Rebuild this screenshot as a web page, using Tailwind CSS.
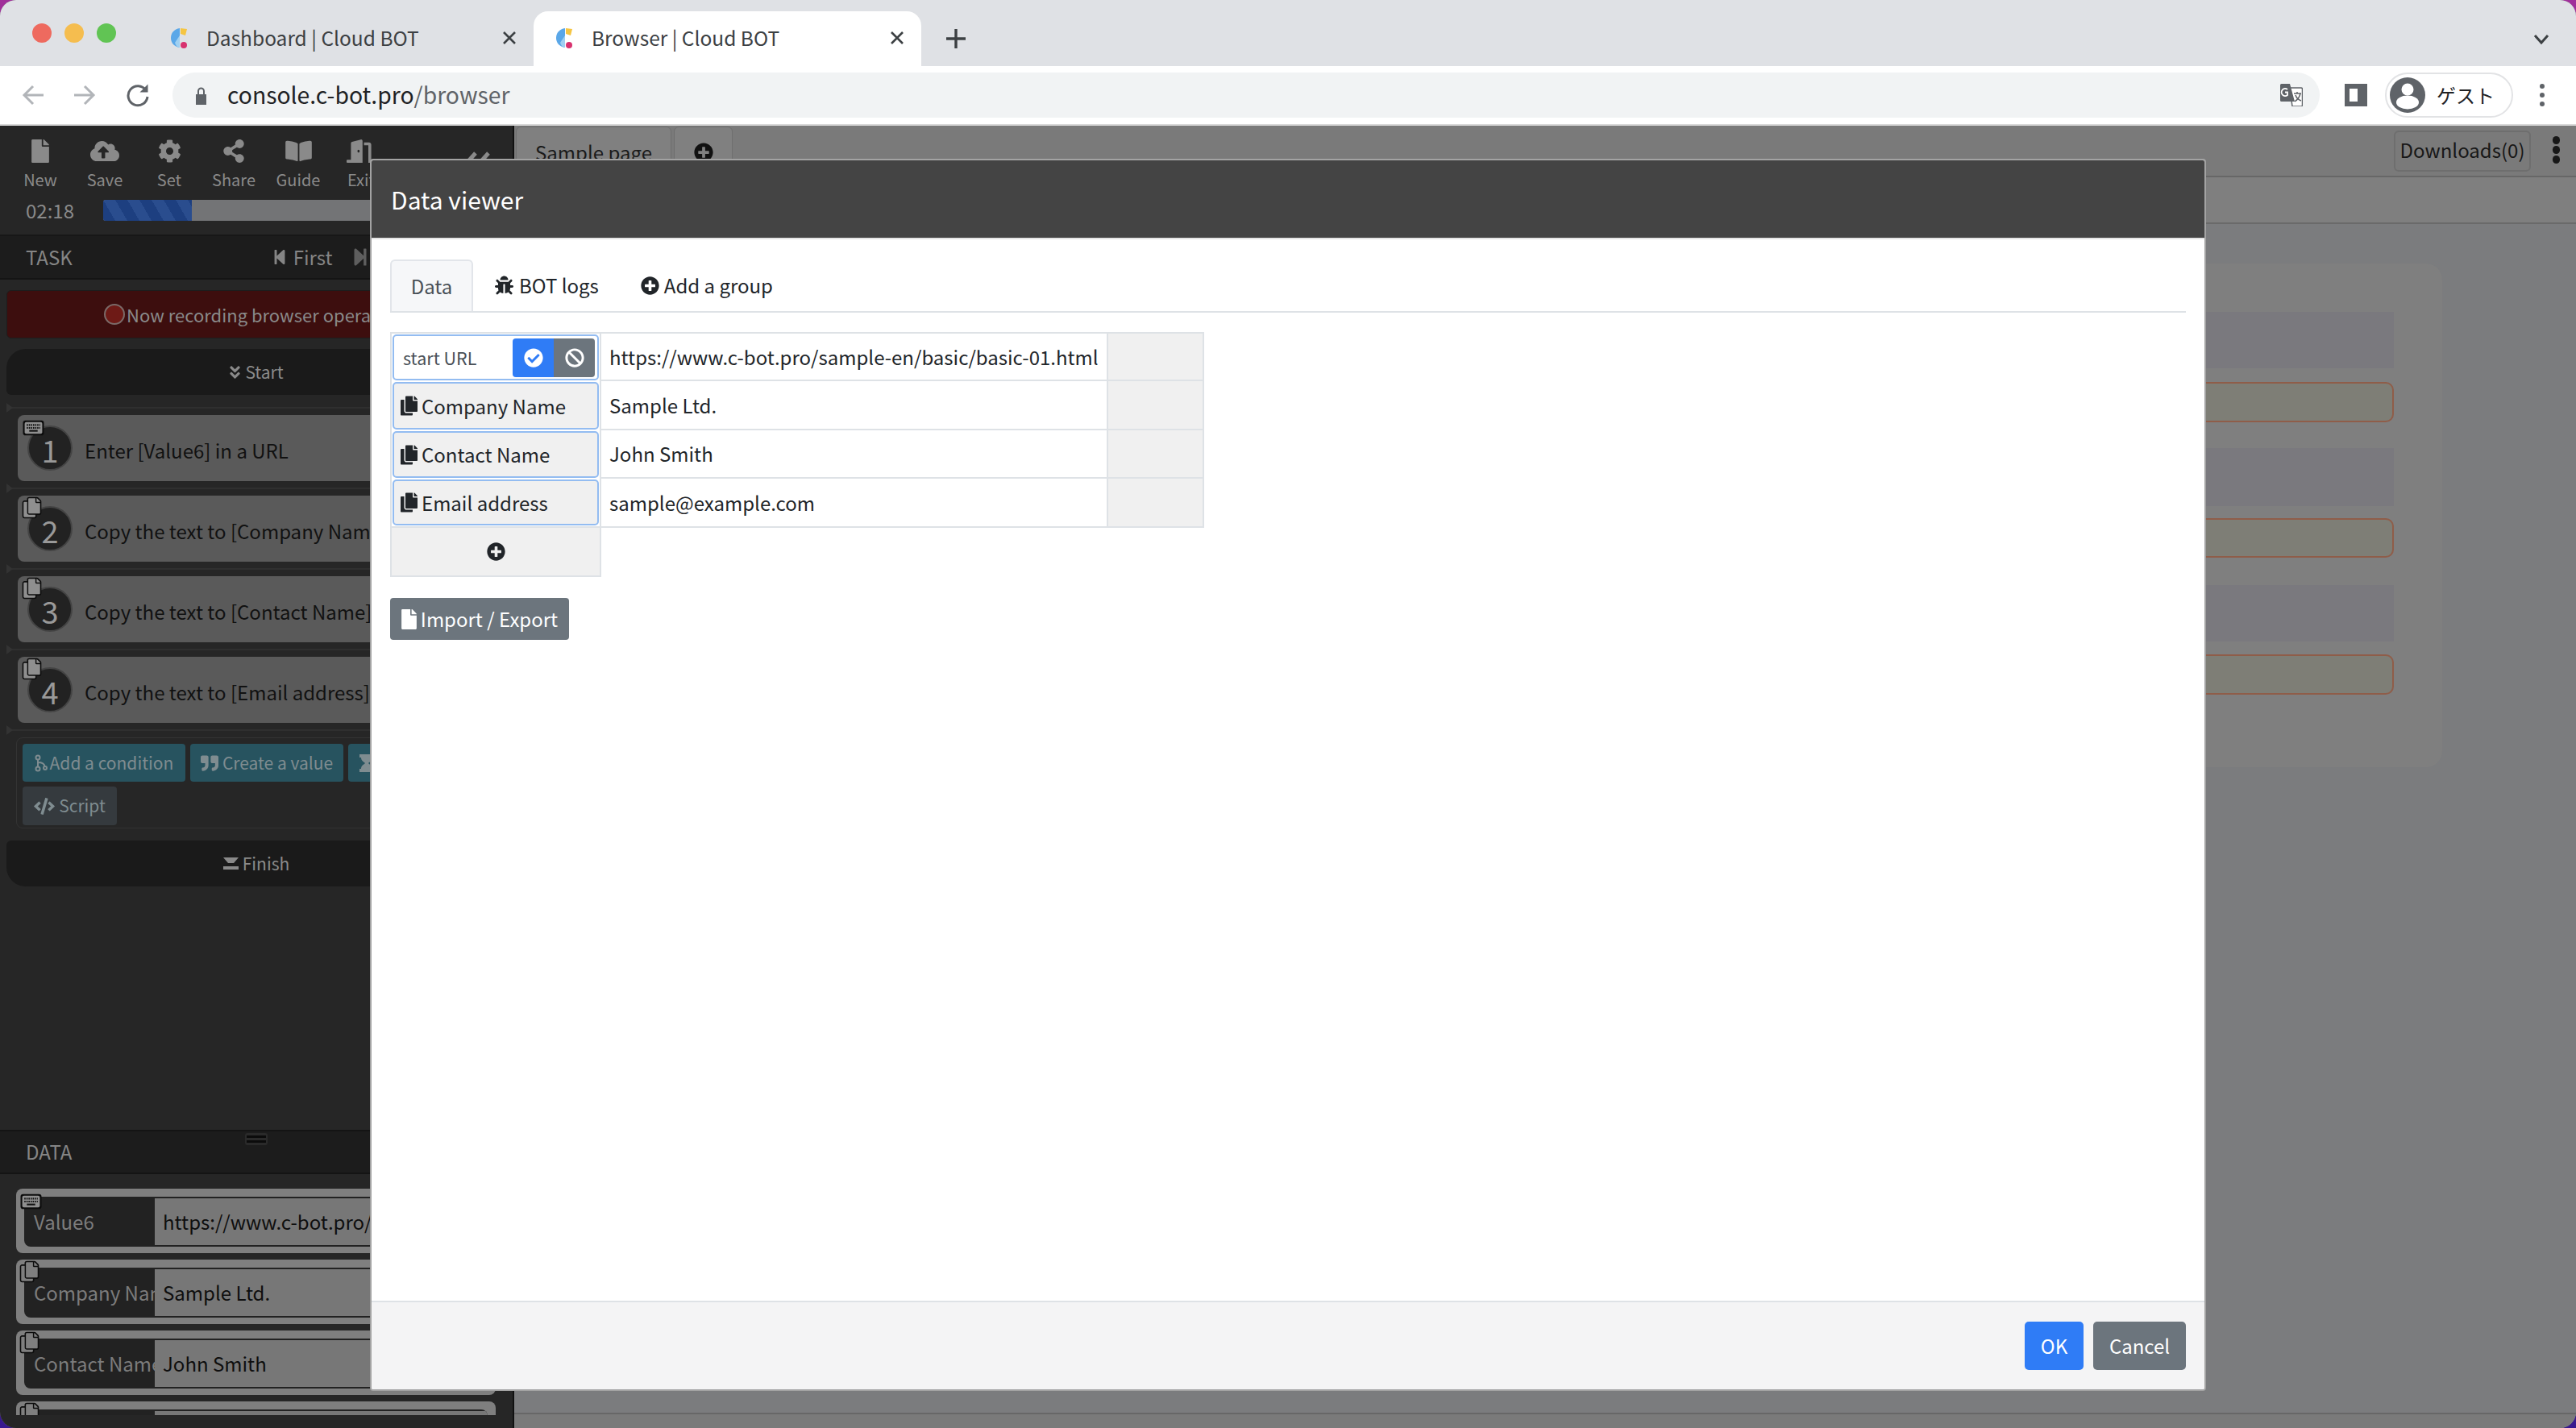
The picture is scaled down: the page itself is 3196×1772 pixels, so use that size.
<!DOCTYPE html>
<html lang="en">
<head>
<meta charset="UTF-8">
<title>Browser | Cloud BOT</title>
<script src="https://cdn.jsdelivr.net/npm/@tailwindcss/browser@4"></script>
</head>
<body class="w-[3196px] h-[1772px] overflow-hidden bg-linear-to-b from-[#a0309a] to-[#38188e] font-['Noto_Sans_CJK_JP','Noto_Sans',sans-serif]">
<svg class="hidden">
  <symbol id="i-file" viewBox="0 0 384 512"><path d="M224 136V0H24C10.7 0 0 10.7 0 24v464c0 13.3 10.7 24 24 24h336c13.3 0 24-10.7 24-24V160H248c-13.2 0-24-10.8-24-24zm160-14.1v6.1H256V0h6.1c6.4 0 12.5 2.5 17 7l97.9 98c4.5 4.5 7 10.6 7 16.9z"/></symbol>
  <symbol id="i-copy" viewBox="0 0 448 512"><path id="p-copy" paint-order="stroke" d="M320 448v40c0 13.255-10.745 24-24 24H24c-13.255 0-24-10.745-24-24V120c0-13.255 10.745-24 24-24h72v296c0 30.879 25.121 56 56 56h168zm0-344V0H152c-13.255 0-24 10.745-24 24v368c0 13.255 10.745 24 24 24h272c13.255 0 24-10.745 24-24V128H344c-13.2 0-24-10.8-24-24zm120.971-31.029L375.029 7.029A24 24 0 0 0 358.059 0H352v96h96v-6.059a24 24 0 0 0-7.029-16.97z"/></symbol>
  <symbol id="i-copy-badge" viewBox="-50 -50 548 612"><use href="#p-copy"/></symbol>
  <symbol id="i-plus" viewBox="0 0 512 512"><path d="M256 8C119 8 8 119 8 256s111 248 248 248 248-111 248-248S393 8 256 8zm144 276c0 6.6-5.4 12-12 12h-92v92c0 6.6-5.4 12-12 12h-56c-6.6 0-12-5.4-12-12v-92h-92c-6.6 0-12-5.4-12-12v-56c0-6.6 5.4-12 12-12h92v-92c0-6.6 5.4-12 12-12h56c6.6 0 12 5.4 12 12v92h92c6.6 0 12 5.4 12 12v56z"/></symbol>
  <symbol id="i-check" viewBox="0 0 512 512"><path d="M504 256c0 136.967-111.033 248-248 248S8 392.967 8 256 119.033 8 256 8s248 111.033 248 248zM227.314 387.314l184-184c6.248-6.248 6.248-16.379 0-22.627l-22.627-22.627c-6.248-6.249-16.379-6.249-22.628 0L216 308.118l-70.059-70.059c-6.248-6.248-16.379-6.248-22.628 0l-22.627 22.627c-6.248 6.248-6.248 16.379 0 22.627l104 104c6.249 6.249 16.379 6.249 22.628.001z"/></symbol>
  <symbol id="i-ban" viewBox="0 0 512 512"><path d="M256 8C119.034 8 8 119.033 8 256s111.034 248 248 248 248-111.034 248-248S392.967 8 256 8zm130.108 117.892c65.448 65.448 70 165.481 20.677 235.637L150.47 105.216c70.204-49.356 170.226-44.735 235.638 20.676zM125.892 386.108c-65.448-65.448-70-165.481-20.677-235.637L361.53 406.784c-70.203 49.356-170.226 44.736-235.638-20.676z"/></symbol>
  <symbol id="i-cog" viewBox="0 0 512 512"><path d="M487.4 315.7l-42.6-24.6c4.3-23.2 4.3-47 0-70.2l42.6-24.6c4.9-2.8 7.1-8.6 5.5-14-11.1-35.6-30-67.8-54.7-94.6-3.8-4.1-10-5.1-14.8-2.3L380.8 110c-17.9-15.4-38.5-27.3-60.8-35.1V25.8c0-5.6-3.9-10.5-9.4-11.7-36.7-8.2-74.3-7.8-109.2 0-5.5 1.2-9.4 6.1-9.4 11.7V75c-22.2 7.9-42.8 19.8-60.8 35.1L88.7 85.5c-4.9-2.8-11-1.9-14.8 2.3-24.7 26.7-43.6 58.9-54.7 94.6-1.7 5.4.6 11.2 5.5 14L67.3 221c-4.3 23.2-4.3 47 0 70.2l-42.6 24.6c-4.9 2.8-7.1 8.6-5.5 14 11.1 35.6 30 67.8 54.7 94.6 3.8 4.1 10 5.1 14.8 2.3l42.6-24.6c17.9 15.4 38.5 27.3 60.8 35.1v49.2c0 5.6 3.9 10.5 9.4 11.7 36.7 8.2 74.3 7.8 109.2 0 5.5-1.2 9.4-6.1 9.4-11.7v-49.2c22.2-7.9 42.8-19.8 60.8-35.1l42.6 24.6c4.9 2.8 11 1.9 14.8-2.3 24.7-26.7 43.6-58.9 54.7-94.6 1.5-5.5-.7-11.3-5.6-14.1zM256 336c-44.1 0-80-35.9-80-80s35.9-80 80-80 80 35.9 80 80-35.9 80-80 80z"/></symbol>
  <symbol id="i-share" viewBox="0 0 448 512"><path d="M352 320c-22.608 0-43.387 7.819-59.79 20.895l-102.486-64.054a96.551 96.551 0 0 0 0-41.683l102.486-64.054C308.613 184.181 329.392 192 352 192c53.019 0 96-42.981 96-96S405.019 0 352 0s-96 42.981-96 96c0 7.158.79 14.13 2.276 20.841L155.79 180.895C139.387 167.819 118.608 160 96 160c-53.019 0-96 42.981-96 96s42.981 96 96 96c22.608 0 43.387-7.819 59.79-20.895l102.486 64.054A96.301 96.301 0 0 0 256 416c0 53.019 42.981 96 96 96s96-42.981 96-96-42.981-96-96-96z"/></symbol>
  <symbol id="i-cloud" viewBox="0 0 640 512"><path d="M537.6 226.6c4.1-10.7 6.4-22.4 6.4-34.6 0-53-43-96-96-96-19.7 0-38.1 6-53.3 16.2C367 64.2 315.3 32 256 32c-88.4 0-160 71.6-160 160 0 2.7.1 5.4.2 8.1C40.2 219.8 0 273.2 0 336c0 79.5 64.5 144 144 144h368c70.7 0 128-57.3 128-128 0-61.9-44-113.6-102.4-125.4zM393.4 288H328v112c0 8.8-7.2 16-16 16h-48c-8.8 0-16-7.2-16-16V288h-65.4c-14.3 0-21.4-17.2-11.3-27.3l105.4-105.4c6.2-6.2 16.4-6.2 22.6 0l105.4 105.4c10.1 10.1 2.9 27.3-11.3 27.3z"/></symbol>
  <symbol id="i-book" viewBox="0 0 576 512"><path d="M542.22 32.05c-54.8 3.11-163.72 14.43-230.96 55.59-4.64 2.84-7.27 7.89-7.27 13.17v363.87c0 11.55 12.63 18.85 23.28 13.49 69.18-34.82 169.23-44.32 218.7-46.92 16.89-.89 30.02-14.43 30.02-30.66V62.75c.01-17.71-15.35-31.74-33.77-30.7zM264.73 87.64C197.5 46.48 88.58 35.17 33.78 32.05 15.36 31.01 0 45.04 0 62.75V400.6c0 16.24 13.13 29.78 30.02 30.66 49.49 2.6 149.59 12.11 218.77 46.95 10.62 5.35 23.21-1.94 23.21-13.46V100.63c0-5.29-2.62-10.14-7.27-12.99z"/></symbol>
  <symbol id="i-door" viewBox="0 0 640 512"><path d="M624 448h-80V113.45C544 86.19 522.47 64 496 64H384v64h96v384h144c8.84 0 16-7.16 16-16v-32c0-8.84-7.16-16-16-16zM312.24 1.01l-192 49.74C105.99 54.44 96 67.7 96 82.92V448H16c-8.84 0-16 7.16-16 16v32c0 8.84 7.16 16 16 16h336V33.18c0-21.58-19.56-37.41-39.76-32.17zM264 288c-13.25 0-24-14.33-24-32s10.75-32 24-32 24 14.33 24 32-10.75 32-24 32z"/></symbol>
  <symbol id="i-bug" viewBox="0 0 512 512"><path d="M511.988 288.9c-.478 17.43-15.217 31.1-32.653 31.1H424v16c0 21.864-4.882 42.584-13.6 61.145l60.228 60.228c12.496 12.497 12.496 32.758 0 45.255-12.498 12.497-32.759 12.496-45.256 0l-54.736-54.736C345.886 467.965 314.351 480 280 480V236c0-6.627-5.373-12-12-12h-24c-6.627 0-12 5.373-12 12v244c-34.351 0-65.886-12.035-90.636-32.108l-54.736 54.736c-12.498 12.497-32.759 12.496-45.256 0-12.496-12.497-12.496-32.758 0-45.255l60.228-60.228C92.882 378.584 88 357.864 88 336v-16H32.666C15.23 320 .491 306.33.013 288.9-.484 270.816 14.028 256 32 256h56v-58.745l-46.628-46.628c-12.496-12.497-12.496-32.758 0-45.255 12.498-12.497 32.758-12.497 45.256 0L141.255 160h229.489l54.627-54.627c12.498-12.497 32.758-12.497 45.256 0 12.496 12.497 12.496 32.758 0 45.255L424 197.255V256h56c17.972 0 32.484 14.816 31.988 32.9zM257 0c-61.856 0-112 50.144-112 112h224C369 50.144 318.856 0 257 0z"/></symbol>
  <symbol id="i-first" viewBox="0 0 448 512"><path d="M64 468V44c0-6.6 5.4-12 12-12h48c6.6 0 12 5.4 12 12v176.4l195.5-181C352.1 22.3 384 36.6 384 64v384c0 27.4-31.9 41.7-52.5 24.6L136 292.7V468c0 6.6-5.4 12-12 12H76c-6.6 0-12-5.4-12-12z"/></symbol>
  <symbol id="i-down" viewBox="0 0 320 512"><path d="M143 256.3L7 120.3c-9.4-9.4-9.4-24.6 0-33.9l22.6-22.6c9.4-9.4 24.6-9.4 33.9 0l96.4 96.4 96.4-96.4c9.4-9.4 24.6-9.4 33.9 0L313 86.3c9.4 9.4 9.4 24.6 0 33.9l-136 136c-9.4 9.5-24.6 9.5-34 .1zm34 192l136-136c9.4-9.4 9.4-24.6 0-33.9l-22.6-22.6c-9.4-9.4-24.6-9.4-33.9 0L160 352.1l-96.4-96.4c-9.4-9.4-24.6-9.4-33.9 0L7 278.3c-9.4 9.4-9.4 24.6 0 33.9l136 136c9.4 9.5 24.6 9.5 34 .1z"/></symbol>
  <symbol id="i-quote" viewBox="0 0 512 512"><path d="M464 32H336c-26.5 0-48 21.5-48 48v128c0 26.5 21.5 48 48 48h80v64c0 35.3-28.7 64-64 64h-8c-13.3 0-24 10.7-24 24v48c0 13.3 10.7 24 24 24h8c88.4 0 160-71.6 160-160V80c0-26.5-21.5-48-48-48zm-288 0H48C21.5 32 0 53.5 0 80v128c0 26.5 21.5 48 48 48h80v64c0 35.3-28.7 64-64 64h-8c-13.3 0-24 10.7-24 24v48c0 13.3 10.7 24 24 24h8c88.4 0 160-71.6 160-160V80c0-26.5-21.5-48-48-48z"/></symbol>
  <symbol id="i-code" viewBox="0 0 640 512"><path d="M278.9 511.5l-61-17.7c-6.4-1.8-10-8.5-8.2-14.9L346.2 8.7c1.8-6.4 8.5-10 14.9-8.2l61 17.7c6.4 1.8 10 8.5 8.2 14.9L293.8 503.3c-1.9 6.4-8.5 10.1-14.9 8.2zm-114-112.2l43.5-46.4c4.6-4.9 4.3-12.7-.8-17.2L117 256l90.6-79.7c5.1-4.5 5.5-12.3.8-17.2l-43.5-46.4c-4.5-4.8-12.1-5.1-17-.5L3.8 247.2c-5.1 4.7-5.1 12.8 0 17.5l144.1 135.1c4.9 4.6 12.5 4.4 17-.5zm327.2.6l144.1-135.1c5.1-4.7 5.1-12.8 0-17.5L492.1 112.1c-4.8-4.5-12.4-4.3-17 .5L431.6 159c-4.6 4.9-4.3 12.7.8 17.2L523 256l-90.6 79.7c-5.1 4.5-5.5 12.3-.8 17.2l43.5 46.4c4.5 4.9 12.1 5.1 17 .6z"/></symbol>
  <symbol id="i-key" viewBox="0 0 26 19"><rect x="0.5" y="0.5" width="25" height="18" rx="3" fill="#0c0c0c"/><rect x="2.5" y="2.5" width="21" height="14" rx="2" fill="#8f8f8f"/><path d="M5 6h16M5 9.5h16" stroke="#111" stroke-width="2" stroke-dasharray="1.5 1"/><path d="M8 13h10" stroke="#111" stroke-width="2"/></symbol>
  <symbol id="i-fav" viewBox="0 0 24 28"><path d="M12 2C5 3 1 8 1 14s4 11 11 12z" fill="#5aa7e8"/><path d="M13 2l8 1-2 8-6-2z" fill="#f5c542"/><circle cx="17" cy="23" r="4" fill="#d8326f"/><path d="M6 20l6-9v15c-3 0-5-3-6-6z" fill="#9fd0f2"/></symbol>
</svg>

<div class="relative w-full h-full flex flex-col overflow-hidden rounded-[20px] bg-[#7b7c7e]">
  <!-- browser tabs -->
  <div class="h-[82px] shrink-0 flex bg-[#dfe1e5] relative">
    <div class="w-[184px] flex items-center gap-[20px] pl-[40px]">
      <span class="w-[24px] h-[24px] rounded-full bg-[#ee6a5f]"></span>
      <span class="w-[24px] h-[24px] rounded-full bg-[#f5bd4f] -ml-[4px]"></span>
      <span class="w-[24px] h-[24px] rounded-full bg-[#61c454] -ml-[4px]"></span>
    </div>
    <div class="w-[478px] flex items-center pt-[12px] pl-[27px]">
      <svg class="w-[24px] h-[28px]"><use href="#i-fav"/></svg>
      <span class="ml-[21px] text-[24.500px] leading-[36px] text-[#3c4043]">Dashboard | Cloud BOT</span>
      <svg class="ml-auto mr-[21px] w-[18px] h-[18px]" viewBox="0 0 18 18" stroke="#3c4043" stroke-width="2.6"><path d="M2 2l14 14M16 2L2 16"/></svg>
    </div>
    <div class="w-[481px] mt-[14px] pb-[2px] rounded-t-[18px] bg-white flex items-center pl-[27px]">
      <svg class="w-[24px] h-[28px]"><use href="#i-fav"/></svg>
      <span class="ml-[21px] text-[24.500px] leading-[36px] text-[#3c4043]">Browser | Cloud BOT</span>
      <svg class="ml-auto mr-[21px] w-[18px] h-[18px]" viewBox="0 0 18 18" stroke="#3c4043" stroke-width="2.6"><path d="M2 2l14 14M16 2L2 16"/></svg>
    </div>
    <div class="flex items-center pt-[14px] pl-[30px]">
      <svg class="w-[26px] h-[26px]" viewBox="0 0 26 26" stroke="#3c4043" stroke-width="3.4"><path d="M13 1v24M1 13h24"/></svg>
    </div>
    <svg class="absolute left-[3143px] top-[42px] w-[20px] h-[14px]" viewBox="0 0 20 14" fill="none" stroke="#3c4043" stroke-width="3"><path d="M2 2l8 9 8-9"/></svg>
  </div>

  <!-- address bar -->
  <div class="h-[72px] shrink-0 bg-white flex items-center">
    <svg class="ml-[27px] w-[28px] h-[28px]" viewBox="0 0 28 28" fill="none" stroke="#b2b5b9" stroke-width="3"><path d="M27 14H3M14 3L3 14l11 11"/></svg>
    <svg class="ml-[36px] w-[28px] h-[28px]" viewBox="0 0 28 28" fill="none" stroke="#b2b5b9" stroke-width="3"><path d="M1 14h24M14 3l11 11-11 11"/></svg>
    <svg class="ml-[37px] w-[30px] h-[30px]" viewBox="0 0 30 30" fill="none" stroke="#5f6368" stroke-width="3"><path d="M25 9a12 12 0 1 0 2 8"/><path d="M27.500 1.500v10h-10z" fill="#5f6368" stroke="none"/></svg>
    <div class="ml-[28px] w-[2664px] h-[56px] rounded-full bg-[#f1f3f4] flex items-center pl-[29px]">
      <svg class="w-[13px] h-[22px] mt-[2px]" viewBox="0 0 13 22" fill="#5f6368"><path d="M0 9h13v13H0z"/><path d="M3 10V5a3.5 3.5 0 0 1 7 0v5" fill="none" stroke="#5f6368" stroke-width="2"/></svg>
      <span class="ml-[26px] text-[28.300px] leading-[40px] -mt-[2px] text-[#202124]">console.c-bot.pro<span class="text-[#5f6368]">/browser</span></span>
      <svg class="ml-auto mr-[21px] w-[28px] h-[28px]" viewBox="0 0 28 28"><path d="M12 5h14a1.500 1.500 0 0 1 1.500 1.500v20a1.500 1.500 0 0 1-1.500 1.500H15z" fill="#fff" stroke="#5f6368" stroke-width="1.500"/><path d="M1.500 0H12l6 22H1.500A1.500 1.500 0 0 1 0 20.500v-19A1.500 1.500 0 0 1 1.500 0z" fill="#5f6368"/><path d="M12 8a4.500 4.500 0 1 0 0 7v-3.500H9" fill="none" stroke="#fff" stroke-width="1.800" transform="translate(-3 -1)"/><path d="M17 12h9M21 10v2M25 12c-1 5-4 8-7 10M19 14c1 3 4 6 7 7" fill="none" stroke="#5f6368" stroke-width="1.500"/></svg>
    </div>
    <div class="ml-[31px] w-[28px] h-[28px] border-[6px] border-[#5f6368] border-r-[12px]"></div>
    <div class="ml-[22px] w-[159px] h-[56px] rounded-full border-2 border-[#e2e3e5] flex items-center pl-[4px]">
      <svg class="w-[44px] h-[44px]" viewBox="0 0 44 44"><circle cx="22" cy="22" r="22" fill="#5f6368"/><circle cx="22" cy="15" r="7.500" fill="#fff"/><ellipse cx="22" cy="31" rx="14" ry="8.500" fill="#fff"/></svg>
      <span class="ml-[14px] text-[24px] leading-[32px] text-[#202124]">ゲスト</span>
    </div>
    <div class="ml-[33px] flex flex-col gap-[5px]">
      <span class="w-[6px] h-[6px] rounded-full bg-[#5f6368]"></span>
      <span class="w-[6px] h-[6px] rounded-full bg-[#5f6368]"></span>
      <span class="w-[6px] h-[6px] rounded-full bg-[#5f6368]"></span>
    </div>
  </div>
  <div class="h-[2px] shrink-0 bg-[#d9d9d9]"></div>

  <!-- app under the dialog -->
  <div class="flex-1 flex min-h-0">
    <aside class="w-[638px] shrink-0 flex flex-col bg-[#262626] border-r-2 border-[#111] overflow-hidden">
      <div class="h-[137px] shrink-0 flex flex-col border-b-2 border-[#171717]">
        <div class="flex pl-[10px] pt-[17px] text-[#8a8a8a] fill-[#8a8a8a]">
          <div class="w-[80px] flex flex-col items-center"><svg class="w-[22px] h-[29px]"><use href="#i-file"/></svg><span class="text-[20px] leading-[28px] mt-[7px]">New</span></div>
          <div class="w-[80px] flex flex-col items-center"><svg class="w-[36px] h-[29px]"><use href="#i-cloud"/></svg><span class="text-[20px] leading-[28px] mt-[7px]">Save</span></div>
          <div class="w-[80px] flex flex-col items-center"><svg class="w-[29px] h-[29px]"><use href="#i-cog"/></svg><span class="text-[20px] leading-[28px] mt-[7px]">Set</span></div>
          <div class="w-[80px] flex flex-col items-center"><svg class="w-[26px] h-[29px]"><use href="#i-share"/></svg><span class="text-[20px] leading-[28px] mt-[7px]">Share</span></div>
          <div class="w-[80px] flex flex-col items-center"><svg class="w-[33px] h-[29px]"><use href="#i-book"/></svg><span class="text-[20px] leading-[28px] mt-[7px]">Guide</span></div>
          <div class="w-[76px] flex flex-col items-center"><svg class="w-[36px] h-[29px]"><use href="#i-door"/></svg><span class="text-[20px] leading-[28px] mt-[7px]">Exit</span></div>
          <svg class="ml-[84px] mt-[13px] w-[40px] h-[26px]" viewBox="0 0 40 26" fill="none" stroke="#8a8a8a" stroke-width="5"><path d="M2 24L20 4M18 24L36 4"/></svg>
        </div>
        <div class="flex items-center mt-[9px] pl-[32px]">
          <span class="w-[96px] text-[24px] leading-[30px] text-[#8a8a8a]">02:18</span>
          <div class="w-[500px] h-[26px] rounded-[3px] bg-[#737476] overflow-hidden">
            <div class="w-[110px] h-full bg-[repeating-linear-gradient(60deg,#1d3f80_0,#1d3f80_13px,#2a4d8e_13px,#2a4d8e_26px)]"></div>
          </div>
        </div>
      </div>
      <div class="h-[54px] shrink-0 flex items-center bg-[#1c1c1c] border-b-2 border-[#141414] pl-[32px]">
        <span class="text-[24px] leading-[32px] text-[#858585]">TASK</span>
        <svg class="ml-[248px] w-[18px] h-[22px] fill-[#858585]"><use href="#i-first"/></svg>
        <span class="ml-[8px] text-[24px] leading-[32px] text-[#858585]">First</span>
        <svg class="ml-[22px] w-[24px] h-[24px] fill-[#5e5e5e] -scale-x-100"><use href="#i-first"/></svg>
        <span class="ml-[8px] text-[24px] leading-[32px] text-[#858585]">Next</span>
      </div>
      <div class="h-[1055px] shrink-0 flex flex-col px-[8px] pt-[13px]">
        <div class="h-[60px] shrink-0 rounded-[6px] bg-[#3d0e0e] border border-[#1d1d1d] flex items-center justify-center text-[22px] text-[#8a8a8a] whitespace-nowrap pr-[6px]">
          <span class="w-[26px] h-[26px] shrink-0 rounded-full bg-[#6e1a16] border-2 border-[#7b6a68] mr-[2px]"></span>Now recording browser operation
        </div>
        <div class="h-[57px] shrink-0 mt-[13px] rounded-tl-[24px] rounded-tr-[24px] rounded-b-[6px] bg-[#1a1a1a] flex items-center justify-center text-[21px] text-[#8a8a8a] gap-[5px]">
          <svg class="w-[15px] h-[20px] fill-[#8a8a8a]"><use href="#i-down"/></svg>Start
        </div>

        <div class="relative mt-[15px] h-[2px] bg-[#2f2f2f] shrink-0"><span class="absolute left-0 -top-[5px] border-y-[6px] border-l-[8px] border-y-transparent border-l-[#333]"></span></div>
        <div class="relative h-[82px] shrink-0 mt-[8px] ml-[14px] rounded-[8px] bg-[#5a5a5a] flex items-center">
          <span class="ml-[12px] w-[56px] h-[56px] rounded-full bg-[#222] border-2 border-[#444] flex items-center justify-center text-[38px] leading-[56px] pt-[4px] text-[#999]">1</span>
          <span class="ml-[15px] text-[24px] leading-[36px] text-[#111] pt-[6px] whitespace-nowrap">Enter [Value6] in a URL</span>
          <svg class="absolute left-[6px] top-[6px] w-[27px] h-[20px]"><use href="#i-key"/></svg>
        </div>
        <div class="relative mt-[8px] h-[2px] bg-[#2f2f2f] shrink-0"><span class="absolute left-0 -top-[5px] border-y-[6px] border-l-[8px] border-y-transparent border-l-[#333]"></span></div>
        <div class="relative h-[82px] shrink-0 mt-[8px] ml-[14px] rounded-[8px] bg-[#5a5a5a] flex items-center">
          <span class="ml-[12px] w-[56px] h-[56px] rounded-full bg-[#222] border-2 border-[#444] flex items-center justify-center text-[38px] leading-[56px] pt-[4px] text-[#999]">2</span>
          <span class="ml-[15px] text-[24px] leading-[36px] text-[#111] pt-[6px] whitespace-nowrap">Copy the text to [Company Name]</span>
          <svg class="absolute left-[5px] top-[1px] w-[25px] h-[28px] fill-[#8f8f8f] stroke-[#0c0c0c] stroke-[70]"><use href="#i-copy-badge"/></svg>
        </div>
        <div class="relative mt-[8px] h-[2px] bg-[#2f2f2f] shrink-0"><span class="absolute left-0 -top-[5px] border-y-[6px] border-l-[8px] border-y-transparent border-l-[#333]"></span></div>
        <div class="relative h-[82px] shrink-0 mt-[8px] ml-[14px] rounded-[8px] bg-[#5a5a5a] flex items-center">
          <span class="ml-[12px] w-[56px] h-[56px] rounded-full bg-[#222] border-2 border-[#444] flex items-center justify-center text-[38px] leading-[56px] pt-[4px] text-[#999]">3</span>
          <span class="ml-[15px] text-[24px] leading-[36px] text-[#111] pt-[6px] whitespace-nowrap">Copy the text to [Contact Name]</span>
          <svg class="absolute left-[5px] top-[1px] w-[25px] h-[28px] fill-[#8f8f8f] stroke-[#0c0c0c] stroke-[70]"><use href="#i-copy-badge"/></svg>
        </div>
        <div class="relative mt-[8px] h-[2px] bg-[#2f2f2f] shrink-0"><span class="absolute left-0 -top-[5px] border-y-[6px] border-l-[8px] border-y-transparent border-l-[#333]"></span></div>
        <div class="relative h-[82px] shrink-0 mt-[8px] ml-[14px] rounded-[8px] bg-[#5a5a5a] flex items-center">
          <span class="ml-[12px] w-[56px] h-[56px] rounded-full bg-[#222] border-2 border-[#444] flex items-center justify-center text-[38px] leading-[56px] pt-[4px] text-[#999]">4</span>
          <span class="ml-[15px] text-[24px] leading-[36px] text-[#111] pt-[6px] whitespace-nowrap">Copy the text to [Email address]</span>
          <svg class="absolute left-[5px] top-[1px] w-[25px] h-[28px] fill-[#8f8f8f] stroke-[#0c0c0c] stroke-[70]"><use href="#i-copy-badge"/></svg>
        </div>
        <div class="relative mt-[8px] h-[2px] bg-[#2f2f2f] shrink-0"><span class="absolute left-0 -top-[5px] border-y-[6px] border-l-[8px] border-y-transparent border-l-[#333]"></span></div>

        <div class="mt-[8px] ml-[12px] h-[113px] shrink-0 rounded-[8px] border border-[#333] p-[7px] flex flex-wrap gap-x-[6px] gap-y-[6px] content-start text-[21px] text-[#7f8c90]">
          <div class="h-[47px] w-[202px] rounded-[4px] bg-[#27535f] flex items-center justify-center gap-[3px]">
            <svg class="w-[16px] h-[22px]" viewBox="0 0 16 22" fill="none" stroke="#7f8c90" stroke-width="2"><circle cx="4" cy="4" r="2.500"/><circle cx="4" cy="18" r="2.500"/><circle cx="13" cy="17" r="2"/><path d="M4 7v8M4 10c5 0 8 2 8.500 5"/></svg>Add a condition
          </div>
          <div class="h-[47px] w-[190px] rounded-[4px] bg-[#27535f] flex items-center justify-center gap-[5px]">
            <svg class="w-[22px] h-[22px] fill-[#7f8c90]"><use href="#i-quote"/></svg>Create a value
          </div>
          <div class="h-[47px] w-[170px] rounded-[4px] bg-[#27535f] flex items-center pl-[14px]">
            <svg class="w-[18px] h-[22px] fill-[#7f8c90]" viewBox="0 0 18 22"><path d="M0 0h18v4h-2c0 4-3 5-5 7 2 2 5 3 5 7h2v4H0v-4h2c0-4 3-5 5-7-2-2-5-3-5-7H0z"/></svg>
          </div>
          <div class="h-[48px] w-[117px] rounded-[4px] bg-[#353a3e] flex items-center justify-center gap-[5px]">
            <svg class="w-[26px] h-[21px] fill-[#7f8c90]"><use href="#i-code"/></svg>Script
          </div>
        </div>
        <div class="h-[57px] shrink-0 mt-[15px] rounded-bl-[24px] rounded-br-[24px] rounded-t-[6px] bg-[#1a1a1a] flex items-center justify-center text-[21px] text-[#8a8a8a] gap-[5px]">
          <svg class="w-[19px] h-[15px] fill-[#8a8a8a]" viewBox="0 0 19 15"><path d="M0 0h19l-6 7h-7z"/><path d="M0 11h19v4H0z"/></svg>Finish
        </div>
      </div>

      <div class="relative h-[55px] shrink-0 flex items-center bg-[#1c1c1c] border-y-2 border-[#141414] pl-[32px]">
        <span class="text-[24px] leading-[32px] text-[#858585] -mt-[2px]">DATA</span>
        <div class="absolute left-[304px] top-[2px] w-[28px] h-[15px] rounded-[3px] bg-[#2a2a2a] px-[2px] py-[3px] flex flex-col justify-between">
          <span class="h-[3px] bg-[#0b0b0b]"></span><span class="h-[3px] bg-[#0b0b0b]"></span>
        </div>
      </div>
      <div class="flex-1 min-h-0 pl-[20px] pr-[21px] pt-[18px] pb-[16px]">
        <div class="h-full flex flex-col gap-[8px] overflow-hidden">
          <div class="relative h-[80px] shrink-0 rounded-[8px] bg-[#7f7f7f] pl-[10px] pr-[10px] pt-[10px] pb-[8px]">
            <div class="flex h-full rounded-[8px] bg-[#222] overflow-hidden items-stretch">
              <span class="w-[162px] shrink-0 pl-[12px] flex items-center text-[24px] text-[#7c7c7c] overflow-hidden whitespace-nowrap">Value6</span>
              <span class="flex-1 my-[2px] bg-[#777] pl-[10px] flex items-center text-[24px] text-[#0e0e0e] whitespace-nowrap overflow-hidden">https://www.c-bot.pro/sample-en/basic/basic-01.html</span>
            </div>
            <svg class="absolute left-[5px] top-[6px] w-[27px] h-[20px]"><use href="#i-key"/></svg>
          </div>
          <div class="relative h-[80px] shrink-0 rounded-[8px] bg-[#7f7f7f] pl-[10px] pr-[10px] pt-[10px] pb-[8px]">
            <div class="flex h-full rounded-[8px] bg-[#222] overflow-hidden items-stretch">
              <span class="w-[162px] shrink-0 pl-[12px] flex items-center text-[24px] text-[#7c7c7c] overflow-hidden whitespace-nowrap">Company Name</span>
              <span class="flex-1 my-[2px] bg-[#777] pl-[10px] flex items-center text-[24px] text-[#0e0e0e] whitespace-nowrap overflow-hidden">Sample Ltd.</span>
            </div>
            <svg class="absolute left-[4px] top-[1px] w-[25px] h-[28px] fill-[#7f7f7f] stroke-[#0c0c0c] stroke-[70]"><use href="#i-copy-badge"/></svg>
          </div>
          <div class="relative h-[80px] shrink-0 rounded-[8px] bg-[#7f7f7f] pl-[10px] pr-[10px] pt-[10px] pb-[8px]">
            <div class="flex h-full rounded-[8px] bg-[#222] overflow-hidden items-stretch">
              <span class="w-[162px] shrink-0 pl-[12px] flex items-center text-[24px] text-[#7c7c7c] overflow-hidden whitespace-nowrap">Contact Name</span>
              <span class="flex-1 my-[2px] bg-[#777] pl-[10px] flex items-center text-[24px] text-[#0e0e0e] whitespace-nowrap overflow-hidden">John Smith</span>
            </div>
            <svg class="absolute left-[4px] top-[1px] w-[25px] h-[28px] fill-[#7f7f7f] stroke-[#0c0c0c] stroke-[70]"><use href="#i-copy-badge"/></svg>
          </div>
          <div class="relative h-[80px] shrink-0 rounded-[8px] bg-[#7f7f7f] pl-[10px] pr-[10px] pt-[10px] pb-[8px]">
            <div class="flex h-full rounded-[8px] bg-[#222] overflow-hidden items-stretch">
              <span class="w-[162px] shrink-0 pl-[12px] flex items-center text-[24px] text-[#7c7c7c] overflow-hidden whitespace-nowrap">Email address</span>
              <span class="flex-1 my-[2px] bg-[#777] pl-[10px] flex items-center text-[24px] text-[#0e0e0e] whitespace-nowrap overflow-hidden">sample@example.com</span>
            </div>
            <svg class="absolute left-[4px] top-[1px] w-[25px] h-[28px] fill-[#7f7f7f] stroke-[#0c0c0c] stroke-[70]"><use href="#i-copy-badge"/></svg>
          </div>
        </div>
      </div>
    </aside>

    <main class="flex-1 min-w-0 flex flex-col bg-[#7b7c7e]">
      <div class="h-[64px] shrink-0 flex items-start bg-[#7a7a7a] border-b-2 border-[#676767]">
        <div class="ml-[2px] mt-[1px] w-[193px] h-[63px] rounded-t-[6px] bg-[#808080] border border-[#6e6e6e] flex items-center justify-center text-[24px] text-[#1a1a1a]">Sample page</div>
        <div class="ml-[3px] mt-[1px] w-[73px] h-[63px] rounded-t-[6px] bg-[#808080] border border-[#6e6e6e] flex items-center justify-center">
          <svg class="w-[24px] h-[24px] fill-[#111]"><use href="#i-plus"/></svg>
        </div>
        <div class="ml-auto mt-[6px] w-[170px] h-[51px] rounded-[6px] border-2 border-[#6e6e6e] flex items-center justify-center text-[24px] leading-[34px] pb-[4px] text-[#171717]">Downloads(0)</div>
        <div class="ml-[27px] mr-[20px] mt-[13px] flex flex-col gap-[2px]">
          <span class="w-[9px] h-[10px] rounded-full bg-[#171717]"></span>
          <span class="w-[9px] h-[10px] rounded-full bg-[#171717]"></span>
          <span class="w-[9px] h-[10px] rounded-full bg-[#171717]"></span>
        </div>
      </div>
      <div class="h-[58px] shrink-0 bg-[#7f7f7f] border-b-2 border-[#6a6a6a]"></div>
      <div class="flex-1 min-h-0 pt-[49px] pl-[40px] pr-[166px] bg-[#7b7c7e]">
        <div class="h-[625px] rounded-t-[20px] rounded-b-[20px] bg-[#7f7f7f] pt-[60px] pl-[60px] pr-[60px] flex flex-col">
          <div class="h-[70px] shrink-0 bg-[#7a797e]"></div>
          <div class="h-[50px] shrink-0 mt-[17px] rounded-[10px] bg-[#7e7e76] border-2 border-[#8f5d49]"></div>
          <div class="h-[72px] shrink-0 mt-[32px] bg-[#7a797e]"></div>
          <div class="h-[49px] shrink-0 mt-[15px] rounded-[10px] bg-[#7e7e76] border-2 border-[#8f5d49]"></div>
          <div class="h-[70px] shrink-0 mt-[34px] bg-[#7a797e]"></div>
          <div class="h-[50px] shrink-0 mt-[16px] rounded-[10px] bg-[#7e7e76] border-2 border-[#8f5d49]"></div>
        </div>
      </div>
      <div class="h-[19px] shrink-0 bg-[#7a7a7a] border-t-2 border-[#676767]"></div>
    </main>
  </div>

  <!-- Data viewer dialog -->
  <div class="absolute left-[459px] top-[197px] w-[2278px] h-[1529px] flex flex-col rounded-[4px] border-2 border-[#a3a3a3] overflow-hidden bg-white">
    <div class="h-[98px] shrink-0 bg-[#444] flex items-center pl-[24px] text-[30px] leading-[40px] text-white border-b-2 border-[#e5e5e5]">Data viewer</div>
    <div class="flex-1 min-h-0 px-[23px] pt-[25px] text-[#212529]">
      <div class="flex items-stretch h-[66px] border-b-2 border-[#dee2e6] text-[24px]">
        <div class="w-[103px] rounded-t-[6px] bg-[#f6f7f9] border-2 border-b-0 border-[#e2e5ea] flex items-center justify-center text-[#495057]">Data</div>
        <div class="ml-[27px] flex items-center gap-[7px]"><svg class="w-[23px] h-[24px] fill-[#212529]"><use href="#i-bug"/></svg>BOT logs</div>
        <div class="ml-[52px] flex items-center gap-[6px]"><svg class="w-[23px] h-[23px] fill-[#212529]"><use href="#i-plus"/></svg>Add a group</div>
      </div>

      <div class="mt-[24px] w-[1010px] text-[24px] leading-[34px]">
        <div class="grid grid-cols-[262px_627px_121px] border-t-2 border-[#dee2e6] h-[61px]">
          <div class="border-x-2 border-[#dee2e6] bg-white p-[1px]">
            <div class="h-full rounded-[5px] border-2 border-[#93bcf1] flex items-center pl-[11px] pr-[3px]">
              <span class="text-[21.500px] text-[#495057]">start URL</span>
              <span class="ml-auto w-[51px] h-[48px] rounded-l-[4px] bg-[#2f7cf6] flex items-center justify-center"><svg class="w-[24px] h-[24px] fill-white"><use href="#i-check"/></svg></span>
              <span class="w-[51px] h-[48px] rounded-r-[4px] bg-[#6c757d] flex items-center justify-center"><svg class="w-[24px] h-[24px] fill-white"><use href="#i-ban"/></svg></span>
            </div>
          </div>
          <div class="pl-[10px] flex items-center whitespace-nowrap border-b-2 border-[#dee2e6]">https://www.c-bot.pro/sample-en/basic/basic-01.html</div>
          <div class="bg-[#f0f0f0] border-x-2 border-b-2 border-[#dee2e6]"></div>
        </div>
        <div class="grid grid-cols-[262px_627px_121px] h-[61px]">
          <div class="border-x-2 border-[#dee2e6] bg-white p-[1px]">
            <div class="h-full rounded-[5px] border-2 border-[#93bcf1] bg-[#f0f0f0] flex items-center pl-[8px] gap-[5px]"><svg class="w-[21px] h-[25px] fill-[#212529]"><use href="#i-copy"/></svg>Company Name</div>
          </div>
          <div class="pl-[10px] flex items-center border-b-2 border-[#dee2e6]">Sample Ltd.</div>
          <div class="bg-[#f0f0f0] border-x-2 border-b-2 border-[#dee2e6]"></div>
        </div>
        <div class="grid grid-cols-[262px_627px_121px] h-[60px]">
          <div class="border-x-2 border-[#dee2e6] bg-white p-[1px]">
            <div class="h-full rounded-[5px] border-2 border-[#93bcf1] bg-[#f0f0f0] flex items-center pl-[8px] gap-[5px]"><svg class="w-[21px] h-[25px] fill-[#212529]"><use href="#i-copy"/></svg>Contact Name</div>
          </div>
          <div class="pl-[10px] flex items-center border-b-2 border-[#dee2e6]">John Smith</div>
          <div class="bg-[#f0f0f0] border-x-2 border-b-2 border-[#dee2e6]"></div>
        </div>
        <div class="grid grid-cols-[262px_627px_121px] h-[61px]">
          <div class="border-x-2 border-b-2 border-[#dee2e6] bg-white p-[1px]">
            <div class="h-full rounded-[5px] border-2 border-[#93bcf1] bg-[#f0f0f0] flex items-center pl-[8px] gap-[5px]"><svg class="w-[21px] h-[25px] fill-[#212529]"><use href="#i-copy"/></svg>Email address</div>
          </div>
          <div class="pl-[10px] flex items-center border-b-2 border-[#dee2e6]">sample@example.com</div>
          <div class="bg-[#f0f0f0] border-x-2 border-b-2 border-[#dee2e6]"></div>
        </div>
        <div class="w-[262px] h-[61px] bg-[#f0f0f0] border-x-2 border-b-2 border-[#dee2e6] flex items-center justify-center">
          <svg class="w-[23px] h-[23px] fill-[#212529]"><use href="#i-plus"/></svg>
        </div>
      </div>

      <div class="mt-[26px] w-[222px] h-[52px] rounded-[4px] bg-[#6c757d] flex items-center justify-center gap-[5px] text-[24px] text-white">
        <svg class="w-[19px] h-[25px] fill-white"><use href="#i-file"/></svg>Import / Export
      </div>
    </div>
    <div class="h-[110px] shrink-0 bg-[#f4f4f5] border-t-2 border-[#dee2e6] flex items-center justify-end gap-[12px] pr-[23px] text-[24px] text-white">
      <div class="w-[73px] h-[60px] rounded-[5px] bg-[#2f7cf6] flex items-center justify-center">OK</div>
      <div class="w-[115px] h-[60px] rounded-[5px] bg-[#6c757d] flex items-center justify-center">Cancel</div>
    </div>
  </div>
</div>
</body>
</html>
